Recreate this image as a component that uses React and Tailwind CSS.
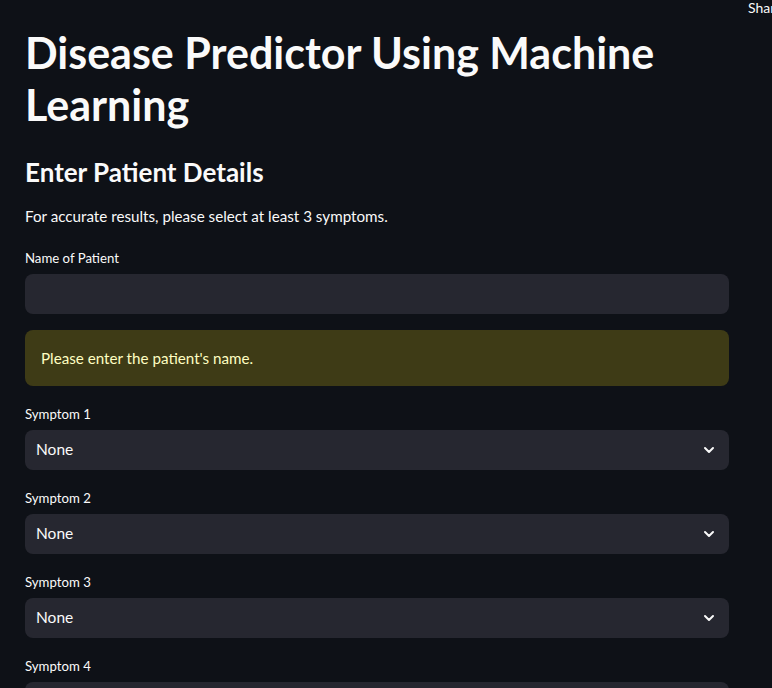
import React from 'react';

const font = { fontFamily: '"Source Sans Pro", Lato, "Noto Sans", sans-serif' };

function Chevron() {
  return (
    <svg width="16" height="16" viewBox="0 0 24 24" fill="none" stroke="#fafafa" strokeWidth="3" strokeLinecap="round" strokeLinejoin="round">
      <path d="M6 9l6 6 6-6" />
    </svg>
  );
}

function SelectBox({ label }) {
  return (
    <div className="flex flex-col">
      <label className="text-[13.2px] leading-[20px] text-[#fafafa] mb-[6px]">{label}</label>
      <div className="h-[40px] bg-[#262730] rounded-lg flex items-center justify-between pl-[11px] pr-[12px]">
        <span className="text-[15.5px] text-[#fafafa]">None</span>
        <Chevron />
      </div>
    </div>
  );
}

export default function App() {
  return (
    <div className="h-[688px] overflow-hidden bg-[#0e1117] text-[#fafafa] relative" style={font}>
      <div className="absolute right-0 top-0 text-[14px] leading-[16px] whitespace-nowrap w-[24px] overflow-hidden">
        Share
      </div>
      <div className="w-[704px] ml-[25px] pt-[27px]">
        <h1 className="text-[43px] font-bold leading-[52px]">
          Disease Predictor Using Machine Learning
        </h1>
        <h2 className="text-[26px] font-bold leading-[36px] mt-[23px]">Enter Patient Details</h2>
        <p className="text-[15.2px] leading-[24px] mt-[14px]">For accurate results, please select at least 3 symptoms.</p>
        <div className="mt-[20px] flex flex-col gap-[16px]">
          <div className="flex flex-col">
            <label className="text-[13.2px] leading-[20px] mb-[6px]">Name of Patient</label>
            <div className="h-[40px] bg-[#262730] rounded-lg" />
          </div>
          <div className="h-[56px] bg-[#3e3b16] rounded-lg flex items-center px-[16px] text-[15.2px] text-[#ffffc2]">
            Please enter the patient's name.
          </div>
          <div className="flex flex-col gap-[18px] mt-[2px]">
            <SelectBox label="Symptom 1" />
            <SelectBox label="Symptom 2" />
            <SelectBox label="Symptom 3" />
            <SelectBox label="Symptom 4" />
          </div>
        </div>
      </div>
    </div>
  );
}
